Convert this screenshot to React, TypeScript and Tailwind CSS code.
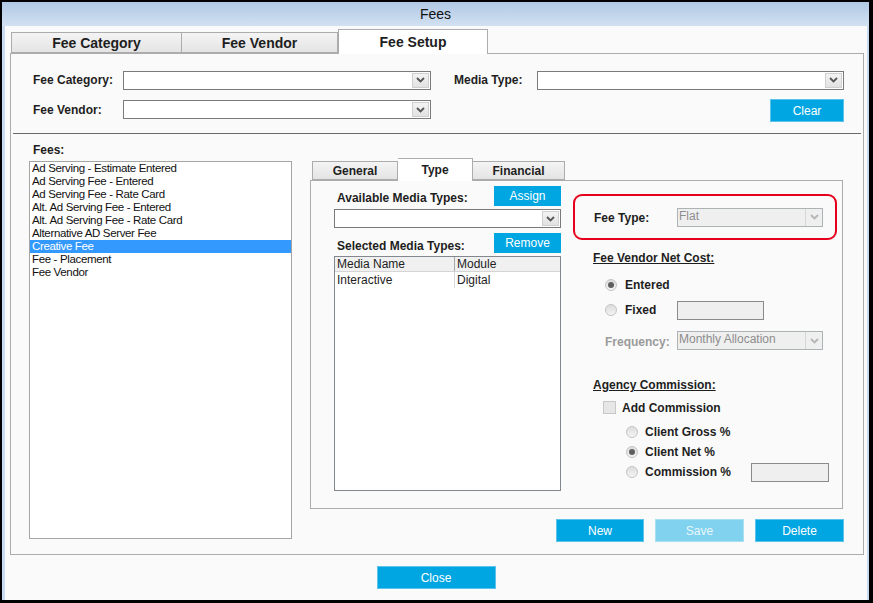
import React from 'react';

const fees = [
  'Ad Serving - Estimate Entered',
  'Ad Serving Fee - Entered',
  'Ad Serving Fee - Rate Card',
  'Alt. Ad Serving Fee - Entered',
  'Alt. Ad Serving Fee - Rate Card',
  'Alternative AD Server Fee',
  'Creative Fee',
  'Fee - Placement',
  'Fee Vendor',
];

const Chevron = ({ color = '#555' }: { color?: string }) => (
  <svg width="9" height="6" viewBox="0 0 9 6">
    <path d="M1 1 L4.5 4.5 L8 1" fill="none" stroke={color} strokeWidth="1.8" />
  </svg>
);

const Select = ({ w, value, disabled }: { w: string; value?: string; disabled?: boolean }) => (
  <div
    className={
      disabled
        ? `${w} h-[19px] flex border border-[#adb2b5] bg-[#efefef]`
        : `${w} h-[19px] flex border border-[#7a7a7a] bg-white`
    }
  >
    <div className={disabled ? 'flex-1 px-[1px] text-[12px] leading-[15px] text-[#8d8d8d]' : 'flex-1'}>{value}</div>
    {disabled ? (
      <div className="w-[17px] flex items-center justify-center border-l border-[#d6d6d6]">
        <Chevron color="#b5b5b5" />
      </div>
    ) : (
      <div className="w-[17px] m-[1px] flex items-center justify-center border border-[#cfcfcf] bg-linear-to-b from-[#f3f3f3] to-[#e2e2e2]">
        <Chevron />
      </div>
    )}
  </div>
);

const Button = ({ label, w, disabled }: { label: string; w: string; disabled?: boolean }) => (
  <div
    className={
      disabled
        ? `${w} h-[23px] flex items-center justify-center border border-[#aadff2] bg-[#80d2ef] text-[12px] text-[#e9f7fc]`
        : `${w} h-[23px] flex items-center justify-center border border-[#5cc4ec] bg-[#00a6e2] text-[12px] text-white`
    }
  >
    {label}
  </div>
);

const SmallButton = ({ label }: { label: string }) => (
  <div className="w-[67px] h-[20px] flex items-center justify-center bg-[#00a6e2] text-[12px] text-white">{label}</div>
);

const Radio = ({ checked }: { checked?: boolean }) => (
  <span className="w-[12px] h-[12px] shrink-0 rounded-full border border-[#c4c4c4] bg-linear-to-b from-[#dcdcdc] to-[#f4f4f4] flex items-center justify-center">
    {checked && <span className="w-[6px] h-[6px] rounded-full bg-[#5f5f5f]" />}
  </span>
);

export default function App() {
  return (
    <div className="w-[873px] h-[603px] bg-black pt-[2px] pl-[2px] pr-[4px] pb-[3px] font-['Liberation_Sans',Arial,sans-serif] text-[#1e1e1e]">
      <div className="h-full flex flex-col bg-[#c8dbf0] pl-[3px] pr-[2px]">
        {/* title bar */}
        <div className="h-[24px] -mx-[3px] -mr-[2px] flex items-center justify-center bg-linear-to-b from-[#b0c8e4] to-[#d2e1f2] text-[14px] text-[#111]">
          Fees
        </div>

        <div className="flex-1 flex flex-col bg-[#fafafa] pl-[5px] pt-[3px]">
          {/* main tabs */}
          <div className="h-[24px] flex items-end ml-[1px]">
            <div className="w-[171px] h-[21px] flex items-center justify-center pt-[1px] border border-[#acacac] bg-linear-to-b from-[#f4f4f4] to-[#e4e4e4] text-[14px] font-bold">
              Fee Category
            </div>
            <div className="w-[156px] h-[21px] flex items-center justify-center pt-[1px] border-y border-r border-[#acacac] bg-linear-to-b from-[#f4f4f4] to-[#e4e4e4] text-[14px] font-bold">
              Fee Vendor
            </div>
            <div className="relative z-10 -mb-[1px] w-[150px] h-[25px] flex justify-center pt-[2px] border-x border-t border-[#acacac] bg-white text-[14px] font-bold">
              Fee Setup
            </div>
          </div>

          {/* main panel */}
          <div className="w-[854px] h-[502px] flex flex-col border border-[#acacac] bg-[#fafafa]">
            <div className="flex items-center h-[18px] mt-[17px] pl-[22px]">
              <div className="w-[90px] text-[12px] font-bold">Fee Category:</div>
              <Select w="w-[308px]" />
              <div className="w-[23px]" />
              <div className="w-[83px] text-[12px] font-bold">Media Type:</div>
              <Select w="w-[307px]" />
            </div>
            <div className="flex items-start h-[23px] mt-[10px] pl-[22px] pr-[19px]">
              <div className="w-[90px] h-[19px] mt-[1px] flex items-center text-[12px] font-bold">Fee Vendor:</div>
              <div className="mt-[1px]">
                <Select w="w-[308px]" />
              </div>
              <div className="ml-auto">
                <Button label="Clear" w="w-[74px]" />
              </div>
            </div>
            <div className="h-px mt-[11px] mx-[2px] bg-[#6a6a6a]" />

            <div className="flex pl-[18px]">
              {/* fees list */}
              <div className="w-[263px] flex flex-col">
                <div className="mt-[9px] h-[14px] mb-[4px] pl-[4px] text-[12px] font-bold leading-[14px]">Fees:</div>
                <div className="h-[378px] border border-[#a5a5a5] bg-white">
                  {fees.map((f) => (
                    <div
                      key={f}
                      className={
                        f === 'Creative Fee'
                          ? 'h-[13px] leading-[13px] px-[2px] bg-[#3399ff] text-white text-[11.5px] tracking-[-0.35px]'
                          : 'h-[13px] leading-[13px] px-[2px] text-[11.5px] tracking-[-0.35px] text-[#111]'
                      }
                    >
                      {f}
                    </div>
                  ))}
                </div>
              </div>

              {/* detail */}
              <div className="w-[534px] ml-[18px] flex flex-col">
                <div className="h-[22px] mt-[24px] flex items-end pl-[2px]">
                  <div className="w-[86px] h-[19px] flex items-center justify-center border border-[#acacac] bg-linear-to-b from-[#f4f4f4] to-[#e4e4e4] text-[12px] font-bold">
                    General
                  </div>
                  <div className="relative z-10 -mb-[1px] w-[75px] h-[23px] flex justify-center pt-[2px] border-t border-r border-[#acacac] bg-white text-[12px] font-bold">
                    Type
                  </div>
                  <div className="w-[92px] h-[19px] flex items-center justify-center border-y border-r border-[#acacac] bg-linear-to-b from-[#f4f4f4] to-[#e4e4e4] text-[12px] font-bold">
                    Financial
                  </div>
                </div>

                <div className="w-[533px] h-[329px] flex border border-[#acacac] bg-[#fafafa]">
                  {/* media types */}
                  <div className="w-[250px] pl-[23px] pt-[5px] flex flex-col">
                    <div className="h-[20px] flex items-center justify-between">
                      <div className="pl-[3px] pt-[3px] text-[12px] font-bold">Available Media Types:</div>
                      <SmallButton label="Assign" />
                    </div>
                    <div className="mt-[3px]">
                      <Select w="w-[227px]" />
                    </div>
                    <div className="h-[20px] mt-[5px] flex items-center justify-between">
                      <div className="pl-[3px] pt-[5px] text-[12px] font-bold">Selected Media Types:</div>
                      <SmallButton label="Remove" />
                    </div>
                    <div className="mt-[3px] h-[235px] border border-[#828790] bg-white">
                      <div className="h-[15px] flex bg-[#f0f0f0] border-b border-[#d5d5d5] text-[12px] leading-[15px]">
                        <div className="w-[120px] pl-[2px] border-r border-[#a8a8a8]">Media Name</div>
                        <div className="flex-1 pl-[2px]">Module</div>
                      </div>
                      <div className="h-[16px] flex text-[12px] leading-[16px]">
                        <div className="w-[120px] pl-[2px] border-r border-[#d8d8d8]">Interactive</div>
                        <div className="flex-1 pl-[2px]">Digital</div>
                      </div>
                    </div>
                  </div>

                  {/* fee type settings */}
                  <div className="ml-[12px] flex flex-col">
                    <div className="mt-[13px] w-[264px] h-[46px] flex items-center pl-[19px] border-2 border-[#e6001c] rounded-[9px]">
                      <div className="w-[83px] pt-[2px] text-[12px] font-bold">Fee Type:</div>
                      <Select w="w-[146px]" value="Flat" disabled />
                    </div>

                    <div className="mt-[11px] h-[14px] pl-[20px] text-[12px] font-bold leading-[14px] underline">
                      Fee Vendor Net Cost:
                    </div>
                    <div className="mt-[10px] h-[20px] pl-[32px] flex items-center gap-[8px] text-[12px] font-bold">
                      <Radio checked />
                      Entered
                    </div>
                    <div className="mt-[5px] h-[20px] pl-[32px] flex items-center text-[12px] font-bold">
                      <Radio />
                      <div className="ml-[8px] w-[52px]">Fixed</div>
                      <div className="w-[87px] h-[19px] border border-[#8a8a8a] bg-[#efefef]" />
                    </div>
                    <div className="mt-[11px] h-[19px] pl-[32px] flex items-center">
                      <div className="w-[72px] pt-[2px] text-[12px] font-bold text-[#9a9a9a]">Frequency:</div>
                      <Select w="w-[146px]" value="Monthly Allocation" disabled />
                    </div>

                    <div className="mt-[28px] h-[14px] pl-[20px] text-[12px] font-bold leading-[14px] underline">
                      Agency Commission:
                    </div>
                    <div className="mt-[9px] h-[13px] pl-[30px] flex items-center gap-[6px] text-[12px] font-bold">
                      <span className="w-[13px] h-[13px] border border-[#c8c8c8] bg-[#e6e6e6]" />
                      Add Commission
                    </div>
                    <div className="mt-[8px] h-[20px] pl-[53px] flex items-center gap-[7px] text-[12px] font-bold">
                      <Radio />
                      Client Gross %
                    </div>
                    <div className="h-[20px] pl-[53px] flex items-center gap-[7px] text-[12px] font-bold">
                      <Radio checked />
                      Client Net %
                    </div>
                    <div className="h-[20px] pl-[53px] flex items-center text-[12px] font-bold">
                      <Radio />
                      <div className="ml-[7px] w-[106px]">Commission %</div>
                      <div className="w-[78px] h-[19px] border border-[#8a8a8a] bg-[#efefef]" />
                    </div>
                  </div>
                </div>

                <div className="mt-[10px] flex justify-end gap-[11px]">
                  <Button label="New" w="w-[88px]" />
                  <Button label="Save" w="w-[89px]" disabled />
                  <Button label="Delete" w="w-[89px]" />
                </div>
              </div>
            </div>
          </div>

          <div className="mt-[11px] flex justify-center pr-[5px]">
            <Button label="Close" w="w-[119px]" />
          </div>
        </div>
      </div>
    </div>
  );
}
